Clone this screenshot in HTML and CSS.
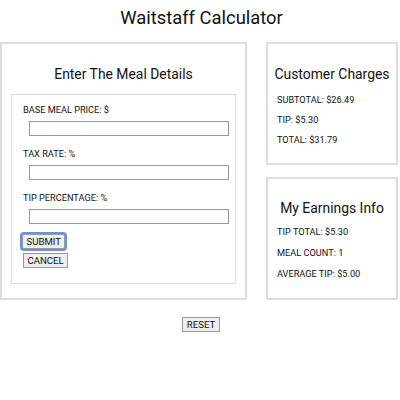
FILE: index.html
```html
<!DOCTYPE html>
<html>
<head>
<meta charset="utf-8">
<link rel="stylesheet" href="styles.css">
</head>
<body>
<h1 class="title">Waitstaff Calculator</h1>
<div class="main">
  <section class="panel meal">
    <h2 class="panel-title">Enter The Meal Details</h2>
    <form class="form-box">
      <label class="field-label">BASE MEAL PRICE: $</label>
      <input class="field-input" type="text">
      <label class="field-label">TAX RATE: %</label>
      <input class="field-input" type="text">
      <label class="field-label">TIP PERCENTAGE: %</label>
      <input class="field-input" type="text">
      <div class="btns">
        <button type="button" class="btn focused">SUBMIT</button>
        <button type="button" class="btn">CANCEL</button>
      </div>
    </form>
  </section>
  <div class="side">
    <section class="panel info charges">
      <h2 class="panel-title small">Customer Charges</h2>
      <p class="line">SUBTOTAL: $26.49</p>
      <p class="line">TIP: $5.30</p>
      <p class="line">TOTAL: $31.79</p>
    </section>
    <section class="panel info earnings">
      <h2 class="panel-title small">My Earnings Info</h2>
      <p class="line">TIP TOTAL: $5.30</p>
      <p class="line">MEAL COUNT: 1</p>
      <p class="line">AVERAGE TIP: $5.00</p>
    </section>
  </div>
</div>
<div class="reset-row"><button type="button" class="btn">RESET</button></div>
</body>
</html>
```
FILE: styles.css
```css
html, body {
  margin: 0;
  padding: 0;
  background: #fff;
  color: #111;
  font-family: Roboto, "Liberation Sans", sans-serif;
}
.title {
  margin: 6px 0 0 0;
  height: 36px;
  text-align: center;
  font-size: 18.4px;
  font-weight: 400;
  line-height: 24px;
  padding-left: 3px;
}
.main {
  display: flex;
  gap: 19px;
}
.panel {
  border: 2px solid #ddd;
  box-sizing: border-box;
}
.meal {
  width: 247px;
  height: 258px;
  padding: 0 9px;
}
.panel-title {
  margin: 21px 0 0 0;
  text-align: center;
  font-size: 13.9px;
  font-weight: 400;
  line-height: 18px;
}
.form-box {
  margin-top: 11px;
  border: 1px solid #ddd;
  height: 190px;
  box-sizing: border-box;
  padding: 8px 0 0 11px;
  display: flex;
  flex-direction: column;
  align-items: flex-start;
}
.field-label {
  font-size: 9.2px;
  line-height: 14px;
  height: 14px;
}
.field-input {
  margin: 4px 0 11px 6px;
  width: 200px;
  height: 15px;
  box-sizing: border-box;
  border: 1px solid #999;
  padding: 0;
}
.btns {
  display: flex;
  flex-direction: column;
  align-items: flex-start;
  gap: 4px;
}
.btn {
  font-family: Roboto, "Liberation Sans", sans-serif;
  font-size: 9.6px;
  line-height: 12px;
  height: 15px;
  padding: 0 3.5px;
  background: #efefef;
  border: 1px solid #999;
  border-radius: 0;
  color: #111;
}
.focused {
  margin-left: -1px;
  margin-top: -1px;
  box-shadow: 0 0 0 2px #6b8fe6;
  border-radius: 2px;
}
.side {
  width: 132px;
  display: flex;
  flex-direction: column;
  gap: 12px;
}
.info {
  padding: 0 0 0 9px;
}
.charges {
  height: 123px;
}
.earnings {
  height: 123px;
}
.panel-title.small {
  text-align: center;
  white-space: nowrap;
  margin-left: -9px;
}
.line {
  margin: 0;
  font-size: 9.2px;
  line-height: 20px;
}
.charges .panel-title { margin-bottom: 7px; }
.earnings .panel-title { margin-top: 20px; margin-bottom: 4px; }
.earnings .line { line-height: 21px; }
.reset-row {
  display: flex;
  justify-content: center;
  padding: 17px 0 0 2px;
}
```
